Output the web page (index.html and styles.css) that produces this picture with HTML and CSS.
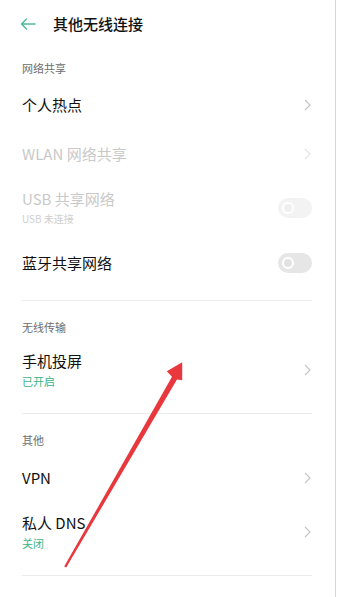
FILE: index.html
```html
<!DOCTYPE html>
<html lang="zh">
<head>
<meta charset="utf-8">
<link rel="stylesheet" href="styles.css">
</head>
<body>
<div class="page">
  <header class="topbar">
    <svg class="back" width="16" height="12" viewBox="0 0 16 12"><path d="M15 6H1.5M6.5 1L1.5 6l5 5" fill="none" stroke="#4dbb98" stroke-width="1.4" stroke-linecap="round" stroke-linejoin="round"/></svg>
    <span class="title">其他无线连接</span>
  </header>

  <div class="label first">网络共享</div>
  <div class="row">
    <div class="txt"><span class="main">个人热点</span></div>
    <svg class="chev" width="7" height="12" viewBox="0 0 7 12"><path d="M1 1l5 5-5 5" fill="none" stroke="#c4c4c4" stroke-width="1.1"/></svg>
  </div>
  <div class="row">
    <div class="txt"><span class="main dis">WLAN 网络共享</span></div>
    <svg class="chev" width="7" height="12" viewBox="0 0 7 12"><path d="M1 1l5 5-5 5" fill="none" stroke="#e2e2e2" stroke-width="1.1"/></svg>
  </div>
  <div class="row tall">
    <div class="txt"><span class="main dis">USB 共享网络</span><span class="sub dis">USB 未连接</span></div>
    <span class="toggle off-dis"><span class="knob"></span></span>
  </div>
  <div class="row">
    <div class="txt"><span class="main">蓝牙共享网络</span></div>
    <span class="toggle"><span class="knob"></span></span>
  </div>
  <div class="divider"></div>

  <div class="label">无线传输</div>
  <div class="row tall">
    <div class="txt"><span class="main">手机投屏</span><span class="sub on">已开启</span></div>
    <svg class="chev" width="7" height="12" viewBox="0 0 7 12"><path d="M1 1l5 5-5 5" fill="none" stroke="#c4c4c4" stroke-width="1.1"/></svg>
  </div>
  <div class="divider"></div>

  <div class="label">其他</div>
  <div class="row">
    <div class="txt"><span class="main">VPN</span></div>
    <svg class="chev" width="7" height="12" viewBox="0 0 7 12"><path d="M1 1l5 5-5 5" fill="none" stroke="#c4c4c4" stroke-width="1.1"/></svg>
  </div>
  <div class="row tall">
    <div class="txt"><span class="main">私人 DNS</span><span class="sub on">关闭</span></div>
    <svg class="chev" width="7" height="12" viewBox="0 0 7 12"><path d="M1 1l5 5-5 5" fill="none" stroke="#c4c4c4" stroke-width="1.1"/></svg>
  </div>
  <div class="divider"></div>

  <svg class="annot" width="337" height="597" viewBox="0 0 337 597">
    <polygon points="64.2,566.6 172,376.8 166.8,371.2 182.2,362.2 182.2,380.2 177,379.6 66.2,567.6" fill="#e8383d"/>
  </svg>
</div>
</body>
</html>
```

FILE: styles.css
```css
* { box-sizing: border-box; }
html, body { margin: 0; padding: 0; background: #fff; }
body {
  font-family: "Noto Sans CJK SC", "Noto Sans", sans-serif;
  color: #111;
  width: 337px;
  height: 597px;
  overflow: hidden;
}
.page {
  position: relative;
  width: 336px;
  height: 597px;
  border-right: 1px solid #d6d6d6;
  padding: 0 23px 0 22px;
}
.topbar {
  height: 48px;
  display: flex;
  align-items: center;
  gap: 17px;
  margin-left: -2px;
}
.back { display: block; }
.title {
  font-size: 15px;
  font-weight: 500;
  color: #111;
  line-height: 20px;
}
.label {
  font-size: 11px;
  line-height: 16px;
  color: #6e6e6e;
  padding: 18px 0 5px;
}
.label.first { padding: 12px 0 4px; }
.row {
  height: 49px;
  display: flex;
  align-items: center;
  justify-content: space-between;
}
.row.tall { height: 60px; }
.txt { display: flex; flex-direction: column; gap: 2px; }
.main { font-size: 15px; line-height: 20px; color: #111; }
.sub { font-size: 11px; line-height: 16px; color: #999; }
.dis { color: #c9c9c9; }
.sub.dis { color: #cfcfcf; font-size: 10px; }
.on { color: #3bb585; }
.chev { display: block; margin-right: 1px; }
.toggle {
  width: 34px;
  height: 20px;
  border-radius: 10px;
  background: #e6e6e6;
  display: flex;
  align-items: center;
  padding-left: 4px;
}
.knob {
  width: 12px;
  height: 12px;
  border-radius: 50%;
  border: 2.5px solid #fff;
  background: #e2e2e2;
}
.toggle.off-dis { background: #f3f3f3; }
.toggle.off-dis .knob { background: #efefef; }
.divider {
  height: 1px;
  background: #ececec;
  margin-top: 13px;
}
.annot {
  position: absolute;
  left: 0;
  top: 0;
  pointer-events: none;
}
```
